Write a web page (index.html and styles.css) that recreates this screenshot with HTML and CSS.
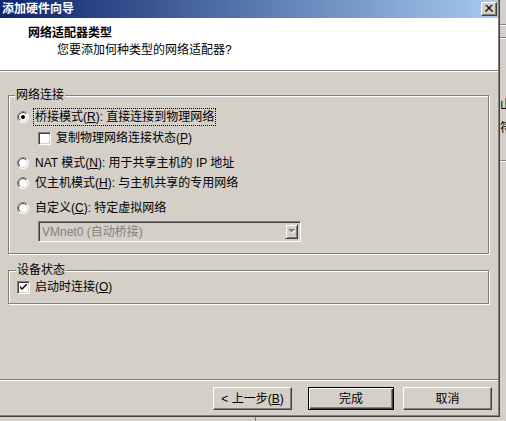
FILE: index.html
```html
<!DOCTYPE html>
<html>
<head>
<meta charset="utf-8">
<link rel="stylesheet" href="styles.css">
</head>
<body>
<svg class="defs" width="0" height="0" aria-hidden="true">
  <defs>
    <linearGradient id="rOuter" x1="0" y1="0" x2="1" y2="1">
      <stop offset="0.5" stop-color="#808080"/><stop offset="0.5" stop-color="#ffffff"/>
    </linearGradient>
    <linearGradient id="rInner" x1="0" y1="0" x2="1" y2="1">
      <stop offset="0.5" stop-color="#404040"/><stop offset="0.5" stop-color="#d4d0c8"/>
    </linearGradient>
  </defs>
</svg>

<div class="bgwin">
  <div class="bg-hline bg-l1"></div>
  <div class="bg-hline bg-l2"></div>
  <span class="bg-text bg-t1">山</span>
  <span class="bg-text bg-t2">符</span>
  <div class="bg-hline bg-l3"></div>
</div>
<div class="bg-vline"></div>

<div class="dialog">
  <div class="dialog-inner">
    <div class="titlebar">
      <span class="title">添加硬件向导</span>
      <div class="close">
        <svg width="8" height="7" viewBox="0 0 8 7"><path d="M0.5 0 L7.5 7 M1.5 0 L8 6.5 M7.5 0 L0.5 7 M6.5 0 L0 6.5" stroke="#000" stroke-width="1" fill="none"/></svg>
      </div>
    </div>
    <div class="header">
      <div class="h-title">网络适配器类型</div>
      <div class="h-sub">您要添加何种类型的网络适配器?</div>
    </div>
    <div class="etch"></div>
    <div class="main">
      <div class="group g1">
        <span class="legend">网络连接</span>
        <div class="row">
          <svg class="radio" width="12" height="12" viewBox="0 0 12 12"><circle cx="6" cy="6" r="5.5" fill="#fff" stroke="url(#rOuter)"/><circle cx="6" cy="6" r="4.5" fill="#fff" stroke="url(#rInner)"/><circle cx="6" cy="6" r="2" fill="#000"/></svg>
          <span class="label focus">桥接模式(<u>R</u>): 直接连接到物理网络</span>
        </div>
        <div class="row sub">
          <span class="check"></span>
          <span class="label">复制物理网络连接状态(<u>P</u>)</span>
        </div>
        <div class="row gap5">
          <svg class="radio" width="12" height="12" viewBox="0 0 12 12"><circle cx="6" cy="6" r="5.5" fill="#fff" stroke="url(#rOuter)"/><circle cx="6" cy="6" r="4.5" fill="#fff" stroke="url(#rInner)"/></svg>
          <span class="label">NAT 模式(<u>N</u>): 用于共享主机的 IP 地址</span>
        </div>
        <div class="row">
          <svg class="radio" width="12" height="12" viewBox="0 0 12 12"><circle cx="6" cy="6" r="5.5" fill="#fff" stroke="url(#rOuter)"/><circle cx="6" cy="6" r="4.5" fill="#fff" stroke="url(#rInner)"/></svg>
          <span class="label">仅主机模式(<u>H</u>): 与主机共享的专用网络</span>
        </div>
        <div class="row gap5">
          <svg class="radio" width="12" height="12" viewBox="0 0 12 12"><circle cx="6" cy="6" r="5.5" fill="#fff" stroke="url(#rOuter)"/><circle cx="6" cy="6" r="4.5" fill="#fff" stroke="url(#rInner)"/></svg>
          <span class="label">自定义(<u>C</u>): 特定虚拟网络</span>
        </div>
        <div class="combo">
          <span class="combo-text">VMnet0 (自动桥接)</span>
          <span class="combo-btn">
            <svg width="7" height="5" viewBox="0 0 7 5"><path d="M1 1 H6 L3.5 3.5 Z" fill="#fff" transform="translate(1,1)"/><path d="M0 0 H7 L3.5 3.5 Z" fill="#808080"/></svg>
          </span>
        </div>
      </div>
      <div class="group g2">
        <span class="legend">设备状态</span>
        <div class="row">
          <span class="check checked">
            <svg width="7" height="7" viewBox="0 0 7 7"><path d="M0 2 L2 4 L7 -1 V1 L2 6 L0 4 Z" fill="#000"/></svg>
          </span>
          <span class="label">启动时连接(<u>O</u>)</span>
        </div>
      </div>
    </div>
    <div class="etch"></div>
    <div class="buttons">
      <div class="btn back">&lt; 上一步(<u>B</u>)</div>
      <div class="btn finish">完成</div>
      <div class="btn cancel">取消</div>
    </div>
  </div>
</div>
</body>
</html>
```

FILE: styles.css
```css
html, body {
  margin: 0;
  padding: 0;
}
body {
  width: 506px;
  height: 421px;
  overflow: hidden;
  position: relative;
  background: #d4d0c8;
  font-family: "Liberation Sans", "Noto Sans CJK SC", sans-serif;
  font-size: 12px;
  color: #000;
}
.defs {
  position: absolute;
  width: 0;
  height: 0;
}
u {
  text-decoration: underline;
  text-underline-offset: 1px;
}

/* background window peeking out */
.bgwin {
  position: absolute;
  left: 500px;
  top: 0;
  width: 6px;
  height: 421px;
  background: #d4d0c8;
  overflow: hidden;
}
.bg-hline {
  position: absolute;
  left: 0;
  width: 6px;
  height: 0;
  border-top: 1px solid #808080;
  border-bottom: 1px solid #fff;
}
.bg-l1 { top: 24px; }
.bg-l2 { top: 37px; }
.bg-l3 { top: 160px; }
.bg-text {
  position: absolute;
  left: 0;
  line-height: 14px;
}
.bg-t1 { top: 98px; }
.bg-t2 { top: 121px; }
.bg-vline {
  position: absolute;
  left: 255px;
  top: 417px;
  width: 1px;
  height: 4px;
  background: #808080;
}

/* dialog window */
.dialog {
  position: relative;
  z-index: 1;
  width: 500px;
  height: 417px;
  box-sizing: border-box;
  border-right: 1px solid #404040;
  border-bottom: 1px solid #404040;
  background: #d4d0c8;
}
.dialog-inner {
  height: 100%;
  box-sizing: border-box;
  border-right: 1px solid #808080;
  border-bottom: 1px solid #808080;
  display: flex;
  flex-direction: column;
}
.titlebar {
  flex: none;
  height: 18px;
  box-sizing: border-box;
  padding: 0 1px 0 2px;
  background: linear-gradient(to right, #0a246a, #a6caf0);
  display: flex;
  align-items: center;
  justify-content: space-between;
}
.title {
  color: #fff;
  font-weight: bold;
  line-height: 14px;
}
.close {
  width: 16px;
  height: 14px;
  box-sizing: border-box;
  background: #d4d0c8;
  border: 1px solid;
  border-color: #fff #404040 #404040 #fff;
  box-shadow: inset -1px -1px #808080;
  display: flex;
  align-items: center;
  justify-content: center;
}
.close svg {
  display: block;
  margin: 0 1px 1px 0;
}
.header {
  flex: none;
  height: 52px;
  box-sizing: border-box;
  padding: 7px 0 0 28px;
  background: #fff;
}
.h-title {
  font-weight: bold;
  line-height: 16px;
}
.h-sub {
  margin: 1px 0 0 29px;
  line-height: 16px;
}
.etch {
  flex: none;
  height: 0;
  border-top: 1px solid #808080;
  border-bottom: 1px solid #fff;
}
.main {
  flex: 1;
  padding: 23px 9px 0 8px;
}

/* group boxes */
.group {
  position: relative;
  border: 1px solid #808080;
  box-shadow: inset 1px 1px #fff, 1px 1px #fff;
}
.legend {
  position: absolute;
  top: -8px;
  left: 6px;
  padding: 0 1px;
  line-height: 14px;
  background: #d4d0c8;
}
.g1 {
  padding: 11px 0 11px 8px;
}
.g2 {
  margin-top: 16px;
  padding: 6px 0 6px 8px;
}
.g2 .legend {
  left: 7px;
}
.row {
  height: 20px;
  display: flex;
  align-items: center;
}
.row.sub {
  margin-top: 1px;
  padding-left: 21px;
}
.row.gap5 {
  margin-top: 5px;
}
.radio {
  flex: none;
  display: block;
  margin-right: 4px;
}
.label {
  border: 1px dotted transparent;
  padding: 1px;
  line-height: 14px;
  white-space: nowrap;
}
.label.focus {
  border-color: #000;
}
.check {
  flex: none;
  width: 13px;
  height: 13px;
  box-sizing: border-box;
  margin-right: 3px;
  background: #fff;
  border: 1px solid;
  border-color: #808080 #fff #fff #808080;
  box-shadow: inset 1px 1px #404040, inset -1px -1px #d4d0c8;
  display: flex;
  align-items: center;
  justify-content: center;
}
.check svg {
  display: block;
}
.combo {
  margin: 3px 0 0 21px;
  width: 263px;
  height: 21px;
  box-sizing: border-box;
  border: 1px solid;
  border-color: #808080 #fff #fff #808080;
  box-shadow: inset 1px 1px #404040, inset -1px -1px #d4d0c8;
  background: #d4d0c8;
  display: flex;
  align-items: center;
  justify-content: space-between;
  padding: 0 2px 0 3px;
}
.combo-text {
  color: #808080;
  line-height: 14px;
}
.combo-btn {
  width: 13px;
  height: 15px;
  box-sizing: border-box;
  border: 1px solid;
  border-color: #d4d0c8 #404040 #404040 #d4d0c8;
  box-shadow: inset 1px 1px #fff, inset -1px -1px #808080;
  background: #d4d0c8;
  display: flex;
  align-items: center;
  justify-content: center;
}
.combo-btn svg {
  display: block;
  overflow: visible;
}

/* bottom buttons */
.buttons {
  flex: none;
  height: 34px;
  box-sizing: border-box;
  padding: 6px 6px 5px 0;
  display: flex;
  justify-content: flex-end;
  align-items: flex-start;
}
.btn {
  height: 23px;
  box-sizing: border-box;
  background: #d4d0c8;
  border: 1px solid;
  border-color: #fff #404040 #404040 #fff;
  box-shadow: inset -1px -1px #808080;
  display: flex;
  align-items: center;
  justify-content: center;
  line-height: 14px;
  white-space: nowrap;
}
.btn.back {
  width: 79px;
}
.btn.finish {
  width: 86px;
  margin-left: 16px;
  border-color: #000;
  box-shadow: inset 1px 1px #fff, inset -1px -1px #404040, inset -2px -2px #808080;
}
.btn.cancel {
  width: 89px;
  margin-left: 9px;
}
```
